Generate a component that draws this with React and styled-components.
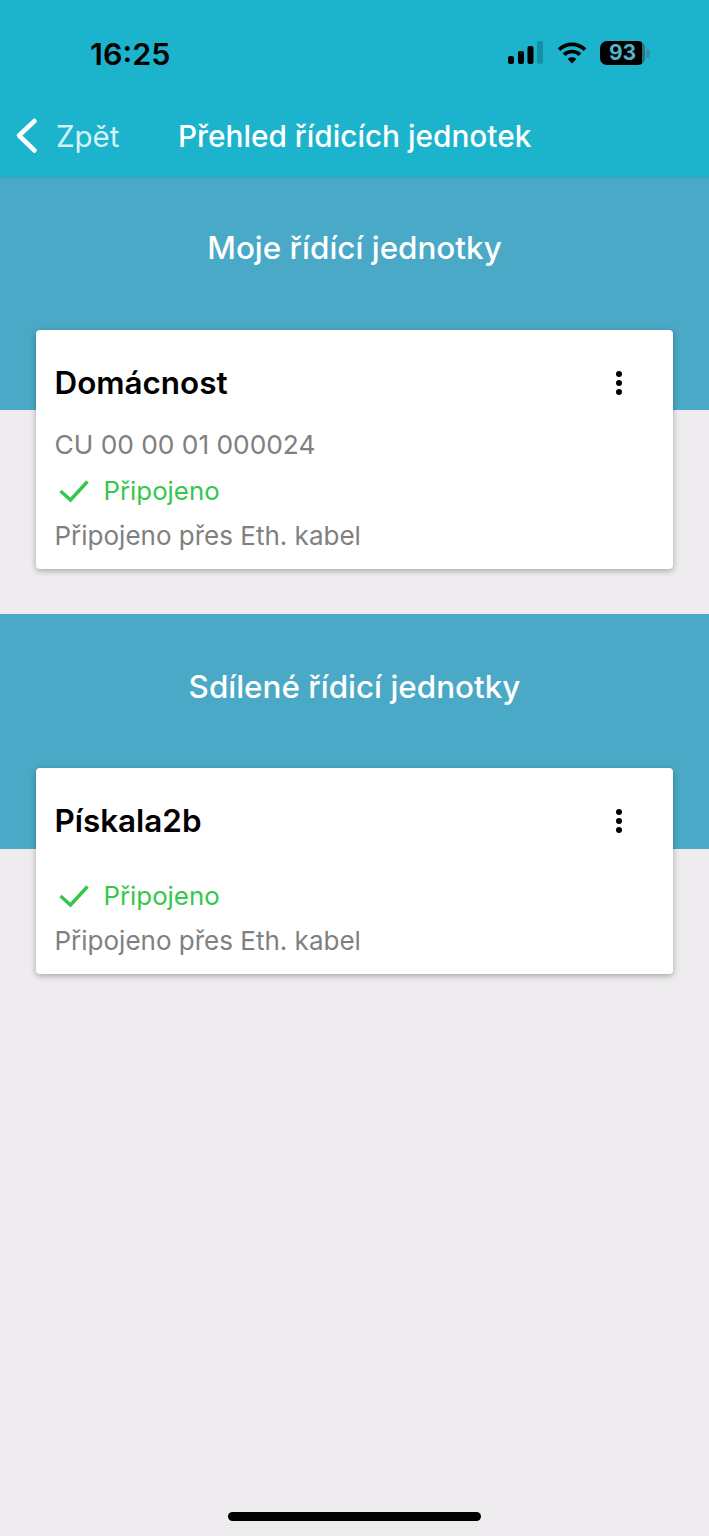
import React from "react";
import styled, { createGlobalStyle } from "styled-components";

const GlobalStyle = createGlobalStyle`
  html, body {
    margin: 0;
    padding: 0;
    background: #eeecee;
  }
  * {
    box-sizing: border-box;
  }
`;

const sections = [
  {
    title: "Moje řídící jednotky",
    name: "Domácnost",
    serial: "CU 00 00 01 000024",
  },
  {
    title: "Sdílené řídicí jednotky",
    name: "Pískala2b",
    serial: null,
  },
];

export default function App() {
  return (
    <>
      <GlobalStyle />
      <Screen>
        <Header>
          <StatusBar>
            <Clock>16:25</Clock>
            <StatusIcons>
              <svg width="36" height="24" viewBox="0 0 36 24">
                <rect x="0" y="15" width="6" height="8" rx="2" fill="#000" />
                <rect x="10" y="10" width="6" height="13" rx="2" fill="#000" />
                <rect x="19.5" y="5" width="6" height="18" rx="2" fill="#000" />
                <rect x="29" y="0" width="6" height="23" rx="2" fill="#000" opacity="0.2" />
              </svg>
              <svg width="30" height="24" viewBox="0 0 30 24" fill="none" stroke="#000" strokeWidth="3.6">
                <path d="M2 8.6C9.2 1.6 20.8 1.6 28 8.6" />
                <path d="M7 13.6C11.4 9.4 18.6 9.4 23 13.6" />
                <path d="M15 22.5 L10.6 18 C13 15.8 17 15.8 19.4 18 Z" fill="#000" stroke="none" />
              </svg>
              <Battery>
                <BatteryBody>93</BatteryBody>
                <BatteryCap />
              </Battery>
            </StatusIcons>
          </StatusBar>
          <NavBar>
            <BackLink>
              <svg width="24" height="38" viewBox="0 0 24 38" fill="none" stroke="#fff" strokeWidth="4.6" strokeLinecap="round" strokeLinejoin="round">
                <path d="M19.5 4 L4 18.5 L19.5 33.5" />
              </svg>
              <BackLabel>Zpět</BackLabel>
            </BackLink>
            <NavTitle>Přehled řídicích jednotek</NavTitle>
          </NavBar>
        </Header>
        {sections.map((s, i) => (
          <Section key={s.name} $first={i === 0}>
            <Banner $first={i === 0}>
              <BannerTitle>{s.title}</BannerTitle>
            </Banner>
            <Card $first={i === 0}>
              <CardHead>
                <CardName>{s.name}</CardName>
                <MenuButton>
                  <Dot />
                  <Dot />
                  <Dot />
                </MenuButton>
              </CardHead>
              {s.serial ? <Serial>{s.serial}</Serial> : <SerialGap />}
              <StatusRow>
                <CheckIcon width="30" height="24" viewBox="0 0 30 24" fill="none" stroke="#35c74c" strokeWidth="3.4">
                  <path d="M1.5 12 L11.5 21 L28.5 2.5" />
                </CheckIcon>
                <StatusText>Připojeno</StatusText>
              </StatusRow>
              <Detail>Připojeno přes Eth. kabel</Detail>
            </Card>
          </Section>
        ))}
        <HomeBar />
      </Screen>
    </>
  );
}

const Screen = styled.div`
  position: relative;
  width: 709px;
  height: 1536px;
  overflow: hidden;
  background: #eeecee;
  font-family: Inter, "Liberation Sans", sans-serif;
`;

const Header = styled.header`
  height: 178px;
  background: #1cb3cd;
  border-bottom: 1px solid #3a9fb8;
`;

const StatusBar = styled.div`
  height: 106px;
  padding: 0 59px 0 90px;
  display: flex;
  align-items: center;
  justify-content: space-between;
`;

const Clock = styled.span`
  font-size: 30.5px;
  font-weight: 600;
  color: #000;
`;

const StatusIcons = styled.div`
  display: flex;
  align-items: center;
  gap: 13px;
`;

const Battery = styled.div`
  display: flex;
  align-items: center;
  gap: 1px;
`;

const BatteryBody = styled.div`
  width: 45px;
  height: 24px;
  border-radius: 7px;
  background: linear-gradient(90deg, #000 93%, #2a6f82 93%);
  color: #55b4cc;
  font-size: 21px;
  font-weight: 700;
  line-height: 24px;
  text-align: center;
`;

const BatteryCap = styled.div`
  width: 4px;
  height: 9px;
  border-radius: 0 3px 3px 0;
  background: #3a8ea6;
`;

const NavBar = styled.nav`
  height: 60px;
  display: flex;
  align-items: center;
`;

const BackLink = styled.div`
  display: flex;
  align-items: center;
  width: 178px;
  padding-left: 15px;
`;

const BackLabel = styled.span`
  font-size: 29.5px;
  color: #d6f2f6;
  margin-left: 17px;
`;

const NavTitle = styled.h1`
  margin: 0;
  font-size: 29.8px;
  font-weight: 500;
  color: #fff;
  white-space: nowrap;
`;

const Section = styled.section`
  margin-top: ${(p) => (p.$first ? "0" : "45px")};
`;

const Banner = styled.div`
  height: ${(p) => (p.$first ? "232px" : "235px")};
  background: #4aa9c6;
  padding-top: ${(p) => (p.$first ? "50px" : "53px")};
`;

const BannerTitle = styled.h2`
  margin: 0;
  font-size: 31.4px;
  font-weight: 500;
  line-height: 40px;
  color: #fff;
  text-align: center;
`;

const Card = styled.article`
  position: relative;
  margin: ${(p) => (p.$first ? "-80px" : "-81px")} 36px 0;
  padding: 31px 19px 15px 18.5px;
  background: #fff;
  border-radius: 4px;
  box-shadow: 0 2px 6px rgba(0, 0, 0, 0.3);
`;

const CardHead = styled.div`
  display: flex;
  align-items: center;
  justify-content: space-between;
  height: 44px;
`;

const CardName = styled.h3`
  margin: 0;
  font-size: 31.4px;
  font-weight: 600;
  color: #000;
`;

const MenuButton = styled.div`
  display: flex;
  flex-direction: column;
  gap: 3px;
  margin-right: 32px;
`;

const Dot = styled.span`
  width: 6px;
  height: 6px;
  border-radius: 50%;
  background: #000;
`;

const Serial = styled.div`
  margin-top: 22px;
  font-size: 26.3px;
  line-height: 36px;
  color: #808080;
`;

const SerialGap = styled.div`
  height: 25px;
`;

const StatusRow = styled.div`
  display: flex;
  align-items: center;
  height: 45px;
  margin-top: 5px;
`;

const CheckIcon = styled.svg`
  margin: 0 14.5px 0 4.5px;
`;

const StatusText = styled.span`
  font-size: 25.8px;
  color: #35c74c;
`;

const Detail = styled.div`
  margin-top: 5px;
  font-size: 26px;
  line-height: 36px;
  color: #808080;
`;

const HomeBar = styled.div`
  position: absolute;
  left: 228px;
  bottom: 15px;
  width: 253px;
  height: 9px;
  border-radius: 5px;
  background: #000;
`;
